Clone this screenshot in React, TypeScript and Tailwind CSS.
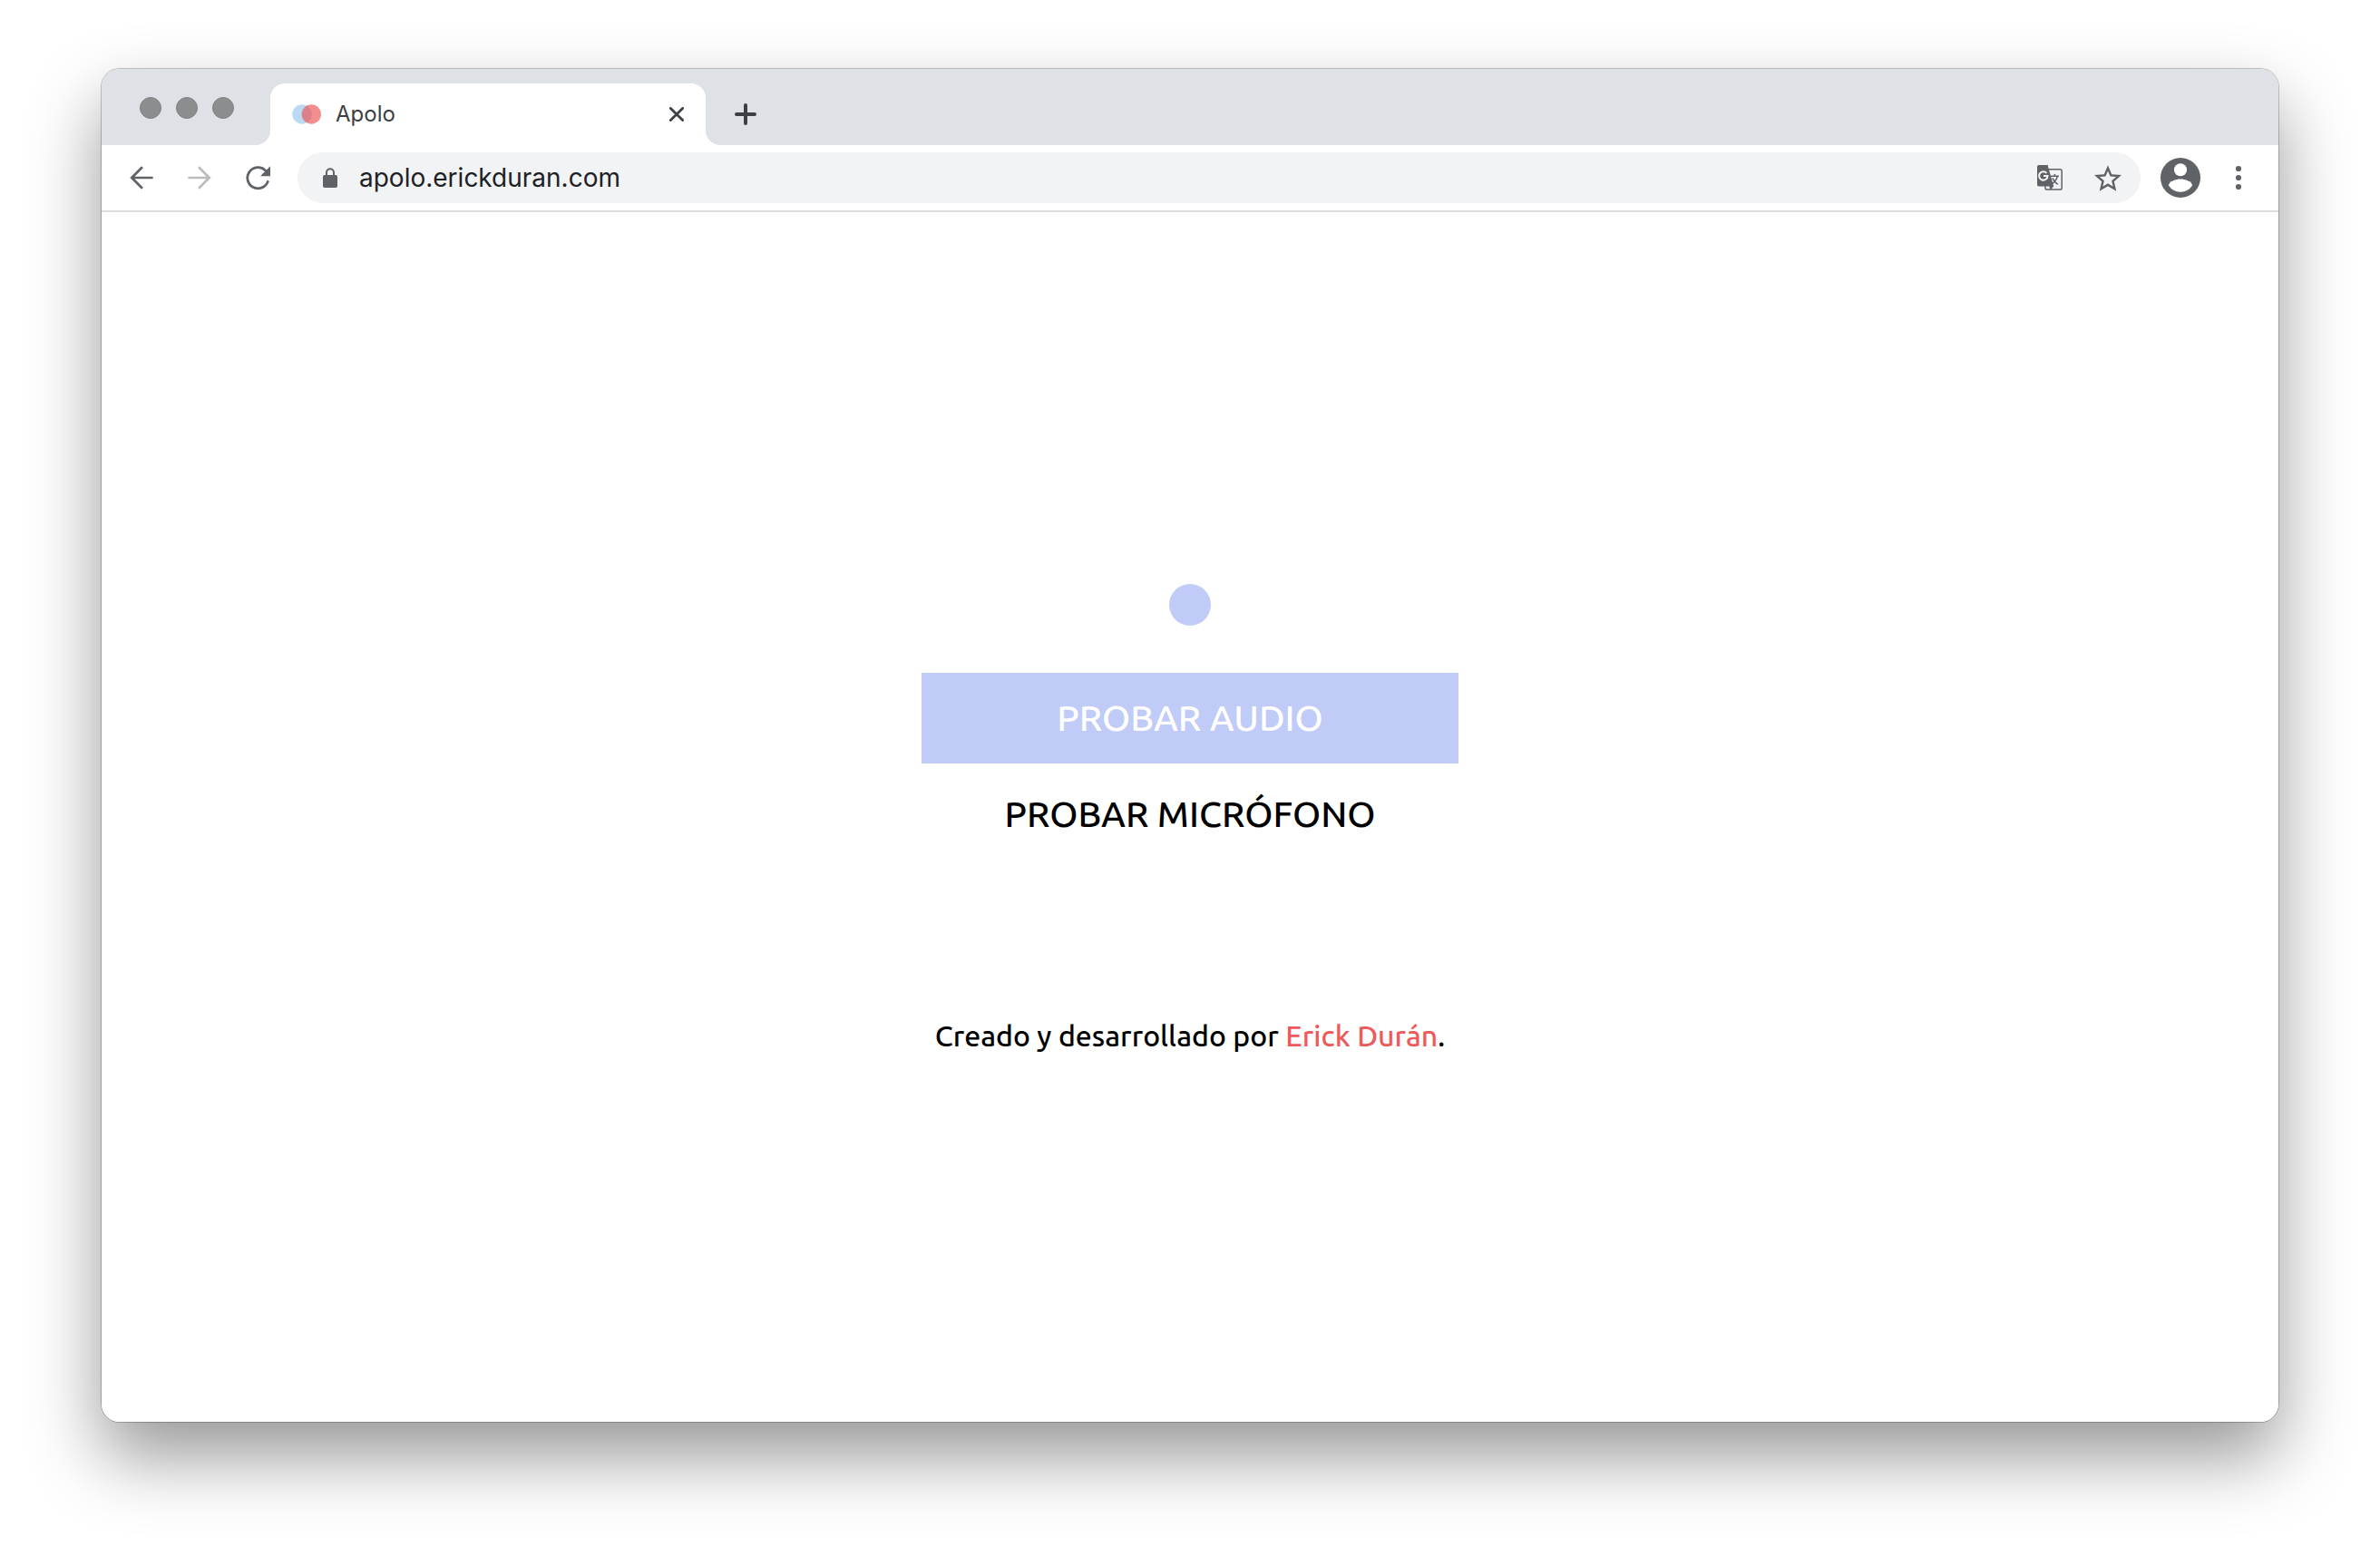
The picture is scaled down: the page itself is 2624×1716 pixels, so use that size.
import React from "react";

function TabFlare({ side }: { side: "left" | "right" }) {
  return (
    <svg aria-hidden="true" viewBox="0 0 16 16" className="size-4 shrink-0 self-end text-white">
      <path fill="currentColor" d={side === "left" ? "M16 0v16H0A16 16 0 0 0 16 0Z" : "M0 0v16h16A16 16 0 0 1 0 0Z"} />
    </svg>
  );
}

function TrafficLights() {
  return (
    <div className="flex items-center gap-4 pl-[42px]">
      {["Cerrar ventana", "Minimizar", "Maximizar"].map((label) => (
        <button key={label} aria-label={label} className="size-6 rounded-full border border-[#7f8081] bg-[#8c8d8e]" />
      ))}
    </div>
  );
}

function TabStrip() {
  return (
    <div className="flex h-[84px] items-stretch bg-[#dee1e6] pt-[2px]">
      <div className="flex w-[170px] shrink-0 items-center">
        <TrafficLights />
      </div>
      <div className="flex w-[512px] shrink-0 pt-[14px]">
        <TabFlare side="left" />
        <div className="flex flex-1 items-center rounded-t-2xl bg-white pr-5 pl-6">
          <svg aria-hidden="true" viewBox="0 0 32 22" className="h-[22px] w-8 shrink-0">
            <circle cx="11" cy="11" r="10.7" fill="#b9daf1" />
            <circle cx="21.3" cy="11" r="10.7" fill="#ee5253" fillOpacity="0.66" />
          </svg>
          <span className="ml-4 flex-1 text-[24px] leading-8 text-[#3c4043]">Apolo</span>
          <button aria-label="Cerrar pestaña" className="flex size-6 items-center justify-center">
            <svg viewBox="0 0 16 16" className="size-4 text-[#3c4043]" fill="none" stroke="currentColor" strokeWidth="2.8" strokeLinecap="round">
              <path d="M1.4 1.4l13.2 13.2M14.6 1.4L1.4 14.6" />
            </svg>
          </button>
        </div>
        <TabFlare side="right" />
      </div>
      <button aria-label="Nueva pestaña" className="mt-[14px] ml-4 flex w-6 items-center justify-center">
        <svg viewBox="0 0 24 24" className="size-6 text-[#3c4043]" fill="none" stroke="currentColor" strokeWidth="4" strokeLinecap="round">
          <path d="M12 2v20M2 12h20" />
        </svg>
      </button>
    </div>
  );
}

function Toolbar() {
  return (
    <div className="flex h-[74px] items-center border-b-2 border-[#dadce0] bg-white pr-7 pl-7 text-[#5f6368]">
      <button aria-label="Atrás" className="flex size-8 items-center justify-center">
        <svg viewBox="0 0 32 32" className="size-8" fill="none" stroke="currentColor" strokeWidth="2.7" strokeLinecap="round">
          <path d="M27.5 16H5.5M16.2 5L5.2 16l11 11" />
        </svg>
      </button>
      <button aria-label="Adelante" disabled className="ml-8 flex size-8 items-center justify-center text-[#babcbe]">
        <svg viewBox="0 0 32 32" className="size-8" fill="none" stroke="currentColor" strokeWidth="2.7" strokeLinecap="round">
          <path d="M4.5 16h22M15.8 5l11 11-11 11" />
        </svg>
      </button>
      <button aria-label="Recargar" className="ml-8 flex size-8 items-center justify-center">
        <svg viewBox="0 0 32 32" className="size-8">
          <path d="M27.3 20.3A11.6 11.6 0 1 1 25.2 8.6" fill="none" stroke="currentColor" strokeWidth="2.8" strokeLinecap="round" />
          <path d="M30 3.3v11H19Z" fill="currentColor" />
        </svg>
      </button>
      <div className="ml-7 flex h-14 flex-1 items-center rounded-full bg-[#f1f3f4] pr-5 pl-7">
        <svg aria-hidden="true" viewBox="0 0 16 22" className="h-[22px] w-4 shrink-0">
          <rect x="0" y="8" width="16" height="14" rx="1.8" fill="currentColor" />
          <path d="M4 9V5.2a4 4 0 0 1 8 0V9" fill="none" stroke="currentColor" strokeWidth="2" />
        </svg>
        <input
          aria-label="Dirección"
          defaultValue="apolo.erickduran.com"
          className="ml-6 min-w-0 flex-1 bg-transparent text-[28px] leading-10 text-[#202124] outline-none"
        />
        <button aria-label="Traducir" className="flex size-8 items-center justify-center">
          <svg viewBox="0 0 28 28" className="size-7">
            <rect x="9" y="4.7" width="18.2" height="22.4" rx="1.8" fill="#f1f3f4" stroke="currentColor" strokeWidth="1.5" />
            <path d="M1.8 0H11.6L18.2 23.6 14.4 27.8 13.4 23.6H1.8A1.8 1.8 0 0 1 0 21.8V1.8A1.8 1.8 0 0 1 1.8 0Z" fill="currentColor" />
            <path d="M10.4 8.9A4.7 4.7 0 1 0 11.5 12H7" fill="none" stroke="#f1f3f4" strokeWidth="2.1" />
            <path d="M15 12.2h9M19.4 10v2.2M22.3 12.4c-.8 3.4-2.8 6.2-5.5 8.2M16.8 14.4c1.3 2.6 3.4 5.2 5.9 7" fill="none" stroke="currentColor" strokeWidth="1.6" />
          </svg>
        </button>
        <button aria-label="Añadir a marcadores" className="ml-8 flex size-8 items-center justify-center">
          <svg viewBox="0 0 20 19" className="h-[29px] w-[30px]" fill="currentColor">
            <path d="M20 7.24l-7.19-.62L10 0 7.19 6.63 0 7.24l5.46 4.73L3.82 19 10 15.27 16.18 19l-1.63-7.03L20 7.24ZM10 13.4l-3.76 2.27 1-4.28-3.32-2.88 4.38-.38L10 4.1l1.71 4.04 4.38.38-3.32 2.88 1 4.28L10 13.4Z" />
          </svg>
        </button>
      </div>
      <button aria-label="Perfil" className="ml-[22px] flex size-11 items-center justify-center">
        <svg viewBox="0 0 44 44" className="size-11">
          <circle cx="22" cy="22" r="22" fill="currentColor" />
          <circle cx="22" cy="13.3" r="7" fill="#fff" />
          <path d="M9 30.5c0-4.2 8-6.9 13-6.9s13 2.7 13 6.9c-2.6 4.3-7.4 7.2-13 7.2S11.6 34.8 9 30.5Z" fill="#fff" />
        </svg>
      </button>
      <button aria-label="Menú" className="ml-[26px] flex size-8 items-center justify-center">
        <svg viewBox="0 0 32 32" className="size-8" fill="currentColor">
          <circle cx="16" cy="6" r="3.1" />
          <circle cx="16" cy="16" r="3.1" />
          <circle cx="16" cy="26" r="3.1" />
        </svg>
      </button>
    </div>
  );
}

function Page() {
  return (
    <main className="flex flex-1 flex-col items-center justify-center bg-white pt-2 font-['Ubuntu','Noto_Sans',sans-serif] font-medium text-black">
      <div className="size-[46px] rounded-full bg-[#c0cbf8]" />
      <button className="mt-[52px] h-[100px] w-[592px] bg-[#c0cbf8] text-[40px] leading-[52px] text-white">PROBAR AUDIO</button>
      <button className="mt-3 h-[88px] w-[592px] text-[40px] leading-[52px]">PROBAR MICRÓFONO</button>
      <p className="mt-44 text-[32px] leading-[48px]">
        Creado y desarrollado por{" "}
        <a href="https://erickduran.com" className="text-[#ee5a5a]">
          Erick Durán
        </a>
        .
      </p>
    </main>
  );
}

export default function App() {
  return (
    <div className="flex min-h-screen flex-col bg-white px-28 pt-[76px] pb-[148px] font-['Inter',sans-serif]">
      <div className="flex flex-1 flex-col rounded-[20px] shadow-[0_0_0_1px_rgba(0,0,0,0.22),0_38px_80px_rgba(0,0,0,0.41)]">
        <div className="flex flex-1 flex-col overflow-hidden rounded-[20px]">
          <TabStrip />
          <Toolbar />
          <Page />
        </div>
      </div>
    </div>
  );
}
